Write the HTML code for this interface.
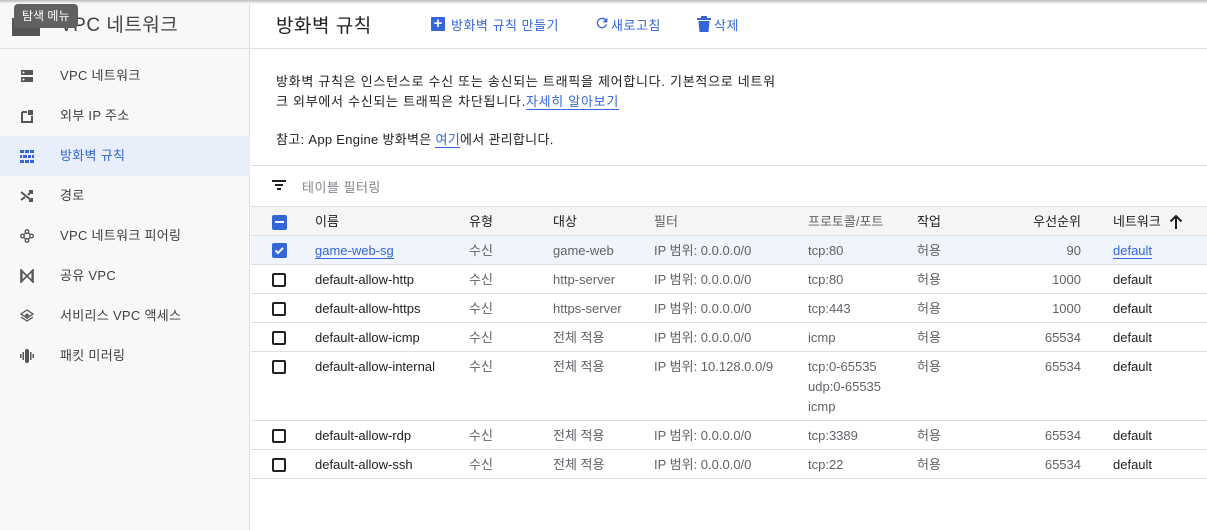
<!DOCTYPE html>
<html><head><meta charset="utf-8"><style>
*{box-sizing:border-box;margin:0;padding:0}
body{width:1207px;height:530px;overflow:hidden;background:#fff;font-family:"Liberation Sans","Noto Sans CJK KR",sans-serif;font-size:13px;color:#202124;position:relative}
.abs{position:absolute}
.side{left:0;top:0;width:250px;height:530px;background:#f8f8f8;border-right:1px solid #ddd}
.topsh{left:0;top:0;width:1207px;height:4px;background:linear-gradient(#bbb,#fff)}
.item{position:absolute;left:0;width:250px;height:40px;line-height:40px;padding-left:60px;color:#3c4043;font-size:13px;letter-spacing:0.3px}
.item.sel{background:#e8eefa;color:#3367d6}
.ico{position:absolute;left:20px;top:13px;width:14px;height:14px}
.hline{height:1px;background:#e0e0e0}
.row{position:absolute;left:251px;width:956px;border-bottom:1px solid #e0e0e0}
.c{position:absolute;top:8px;line-height:14px;color:#5f6368}
.cb{position:absolute;left:21px;top:8px;width:14px;height:14px;border:2px solid #202124;border-radius:2px}
</style></head><body>
<div class="abs side"></div>
<div class="abs topsh"></div>
<div class="abs" style="left:12px;top:18px;width:28px;height:18px;background:#555"></div>
<div class="abs" style="left:60px;top:10px;font-size:19px;color:#444;letter-spacing:0.5px">VPC 네트워크</div>
<div class="abs" style="left:14px;top:4px;height:24px;line-height:24px;padding:0 8px;background:#616161;color:#fff;border-radius:4px;font-size:12px">탐색 메뉴</div>
<div class="abs hline" style="left:0;top:48px;width:1207px"></div>
<div class="item" style="top:56px"><svg class="ico" viewBox="0 0 14 14"><rect x="1" y="1" width="12" height="5" fill="#555"/><rect x="1" y="8" width="12" height="5" fill="#555"/><circle cx="3.5" cy="3.5" r="1" fill="#fff"/><circle cx="3.5" cy="10.5" r="1" fill="#fff"/></svg>VPC 네트워크</div>
<div class="item" style="top:96px"><svg class="ico" viewBox="0 0 14 14"><path d="M2 3h5M2 3v10h10V7" stroke="#555" stroke-width="2" fill="none"/><rect x="8" y="1" width="5" height="5" fill="#555"/></svg>외부 IP 주소</div>
<div class="item sel" style="top:136px"><svg class="ico" viewBox="0 0 14 14"><g fill="#3367d6"><rect x="0" y="1" width="14" height="3"/><rect x="0" y="6" width="14" height="3"/><rect x="0" y="11" width="14" height="3"/></g><g fill="#e8eefa"><rect x="4" y="1" width="1" height="3"/><rect x="9" y="1" width="1" height="3"/><rect x="2" y="6" width="1" height="3"/><rect x="7" y="6" width="1" height="3"/><rect x="11" y="6" width="1" height="3"/><rect x="4" y="11" width="1" height="3"/><rect x="9" y="11" width="1" height="3"/></g></svg>방화벽 규칙</div>
<div class="item" style="top:176px"><svg class="ico" viewBox="0 0 14 14"><path d="M1 3l10 8M1 11l4-3M8 6l3-3M9 2h3v3M9 12h3V9" stroke="#555" stroke-width="2" fill="none"/></svg>경로</div>
<div class="item" style="top:216px"><svg class="ico" viewBox="0 0 14 14" fill="none" stroke="#555" stroke-width="1.3"><circle cx="7" cy="2.5" r="1.8"/><circle cx="2.5" cy="7" r="1.8"/><circle cx="11.5" cy="7" r="1.8"/><circle cx="7" cy="11.5" r="1.8"/><path d="M4 5.5l1.7-1.7M8.3 3.8l1.7 1.7M10 8.5l-1.7 1.7M5.7 10.2L4 8.5"/></svg>VPC 네트워크 피어링</div>
<div class="item" style="top:256px"><svg class="ico" viewBox="0 0 14 14"><path d="M1 1v12l6-6zM13 1v12L7 7z" stroke="#555" stroke-width="1.6" fill="none"/><path d="M1 1v12h1.6V1z" fill="#555"/><path d="M11.4 1v12H13V1z" fill="#555"/></svg>공유 VPC</div>
<div class="item" style="top:296px"><svg class="ico" viewBox="0 0 14 14" fill="none" stroke="#555" stroke-width="1.3"><path d="M7 1l6 4-6 4-6-4z"/><path d="M1 8l6 4 6-4"/><path d="M7 5v5M5 7l2-2 2 2"/></svg>서비리스 VPC 액세스</div>
<div class="item" style="top:336px"><svg class="ico" viewBox="0 0 14 14" fill="#555"><rect x="5" y="0" width="4" height="14" rx="2"/><rect x="2.5" y="3" width="1.5" height="8"/><rect x="10" y="3" width="1.5" height="8"/><rect x="0" y="5" width="1.5" height="4"/><rect x="12.5" y="5" width="1.5" height="4"/></svg>패킷 미러링</div>

<div class="abs" style="left:276px;top:11px;font-size:19px;color:#202124;letter-spacing:0.5px">방화벽 규칙</div>
<div class="abs" style="left:431px;top:17px;width:14px;height:14px;background:#3367d6;border-radius:1px;color:#fff;font-size:15px;line-height:13px;text-align:center;font-weight:bold">+</div>
<div class="abs" style="left:451px;top:15px;color:#3367d6;letter-spacing:0.5px">방화벽 규칙 만들기</div>
<svg class="abs" style="left:594px;top:15px" width="16" height="16" viewBox="0 0 24 24"><path fill="#3367d6" d="M17.65 6.35A7.96 7.96 0 0 0 12 4a8 8 0 1 0 7.73 10h-2.08A6 6 0 1 1 12 6c1.66 0 3.14.69 4.22 1.78L13 11h7V4l-2.35 2.35z"/></svg>
<div class="abs" style="left:611px;top:15px;color:#3367d6;letter-spacing:0.5px">새로고침</div>
<svg class="abs" style="left:697px;top:16px" width="14" height="16" viewBox="0 0 14 16"><rect x="4" y="0" width="6" height="2" fill="#3367d6"/><rect x="0" y="2" width="14" height="2" fill="#3367d6"/><path d="M1.5 5h11l-1 11h-9z" fill="#3367d6"/></svg>
<div class="abs" style="left:714px;top:15px;color:#3367d6;letter-spacing:0.5px">삭제</div>

<div class="abs" style="left:276px;top:72px;line-height:20px;color:#202124;width:560px;letter-spacing:0.72px">방화벽 규칙은 인스턴스로 수신 또는 송신되는 트래픽을 제어합니다. 기본적으로 네트워<br>크 외부에서 수신되는 트래픽은 차단됩니다.<span style="color:#3367d6;border-bottom:1px solid #3367d6">자세히 알아보기</span></div>
<div class="abs" style="left:276px;top:129px;color:#202124;letter-spacing:0.3px">참고: App Engine 방화벽은 <span style="color:#3367d6;border-bottom:1px solid #3367d6">여기</span>에서 관리합니다.</div>

<div class="abs hline" style="left:251px;top:165px;width:956px"></div>
<svg class="abs" style="left:272px;top:180px" width="14" height="10" viewBox="0 0 14 10"><rect x="0" y="0" width="14" height="2" fill="#202124"/><rect x="3" y="4" width="8" height="2" fill="#202124"/><rect x="5" y="8" width="4" height="2" fill="#202124"/></svg>
<div class="abs" style="left:302px;top:177px;color:#80868b;letter-spacing:0.5px">테이블 필터링</div>

<div class="row" style="top:206px;height:30px;background:#f5f5f5;border-top:1px solid #e0e0e0">
<div style="position:absolute;left:21px;top:8px;width:15px;height:15px;background:#3367d6;border-radius:2px"><div style="position:absolute;left:3px;top:6px;width:9px;height:2px;background:#fff"></div></div>
<div class="c" style="left:64px;color:#202124">이름</div>
<div class="c" style="left:218px;color:#202124">유형</div>
<div class="c" style="left:302px;color:#202124">대상</div>
<div class="c" style="left:403px">필터</div>
<div class="c" style="left:557px">프로토콜/포트</div>
<div class="c" style="left:666px;color:#202124">작업</div>
<div class="c" style="left:730px;width:100px;text-align:right;color:#202124">우선순위</div>
<div class="c" style="left:862px;color:#202124">네트워크</div>
<svg style="position:absolute;left:918px;top:7px" width="14" height="15" viewBox="0 0 14 15"><path d="M7 15V2M1.5 7.5L7 2l5.5 5.5" stroke="#202124" stroke-width="2" fill="none"/></svg>
</div>

<div class="row" style="top:236px;height:29px;background:#eff4fd">
<div style="position:absolute;left:21px;top:7px;width:15px;height:15px;background:#3367d6;border-radius:2px"><svg width="15" height="15" viewBox="0 0 15 15"><path d="M3.5 7.5l2.5 2.5 5-5" stroke="#fff" stroke-width="2" fill="none"/></svg></div>
<div class="c" style="left:64px;color:#3367d6;border-bottom:1px solid #3367d6">game-web-sg</div>
<div class="c" style="left:218px">수신</div><div class="c" style="left:302px">game-web</div><div class="c" style="left:403px">IP 범위: 0.0.0.0/0</div><div class="c" style="left:557px">tcp:80</div><div class="c" style="left:666px">허용</div><div class="c" style="left:730px;width:100px;text-align:right">90</div><div class="c" style="left:862px;color:#3367d6;border-bottom:1px solid #3367d6">default</div>
</div>
<div class="row" style="top:265px;height:29px"><div class="cb"></div>
<div class="c" style="left:64px;color:#202124">default-allow-http</div><div class="c" style="left:218px">수신</div><div class="c" style="left:302px">http-server</div><div class="c" style="left:403px">IP 범위: 0.0.0.0/0</div><div class="c" style="left:557px">tcp:80</div><div class="c" style="left:666px">허용</div><div class="c" style="left:730px;width:100px;text-align:right">1000</div><div class="c" style="left:862px;color:#202124">default</div></div>
<div class="row" style="top:294px;height:29px"><div class="cb"></div>
<div class="c" style="left:64px;color:#202124">default-allow-https</div><div class="c" style="left:218px">수신</div><div class="c" style="left:302px">https-server</div><div class="c" style="left:403px">IP 범위: 0.0.0.0/0</div><div class="c" style="left:557px">tcp:443</div><div class="c" style="left:666px">허용</div><div class="c" style="left:730px;width:100px;text-align:right">1000</div><div class="c" style="left:862px;color:#202124">default</div></div>
<div class="row" style="top:323px;height:29px"><div class="cb"></div>
<div class="c" style="left:64px;color:#202124">default-allow-icmp</div><div class="c" style="left:218px">수신</div><div class="c" style="left:302px">전체 적용</div><div class="c" style="left:403px">IP 범위: 0.0.0.0/0</div><div class="c" style="left:557px">icmp</div><div class="c" style="left:666px">허용</div><div class="c" style="left:730px;width:100px;text-align:right">65534</div><div class="c" style="left:862px;color:#202124">default</div></div>
<div class="row" style="top:352px;height:69px"><div class="cb"></div>
<div class="c" style="left:64px;color:#202124">default-allow-internal</div><div class="c" style="left:218px">수신</div><div class="c" style="left:302px">전체 적용</div><div class="c" style="left:403px">IP 범위: 10.128.0.0/9</div><div class="c" style="left:557px;line-height:20px;top:5px">tcp:0-65535<br>udp:0-65535<br>icmp</div><div class="c" style="left:666px">허용</div><div class="c" style="left:730px;width:100px;text-align:right">65534</div><div class="c" style="left:862px;color:#202124">default</div></div>
<div class="row" style="top:421px;height:29px"><div class="cb"></div>
<div class="c" style="left:64px;color:#202124">default-allow-rdp</div><div class="c" style="left:218px">수신</div><div class="c" style="left:302px">전체 적용</div><div class="c" style="left:403px">IP 범위: 0.0.0.0/0</div><div class="c" style="left:557px">tcp:3389</div><div class="c" style="left:666px">허용</div><div class="c" style="left:730px;width:100px;text-align:right">65534</div><div class="c" style="left:862px;color:#202124">default</div></div>
<div class="row" style="top:450px;height:29px"><div class="cb"></div>
<div class="c" style="left:64px;color:#202124">default-allow-ssh</div><div class="c" style="left:218px">수신</div><div class="c" style="left:302px">전체 적용</div><div class="c" style="left:403px">IP 범위: 0.0.0.0/0</div><div class="c" style="left:557px">tcp:22</div><div class="c" style="left:666px">허용</div><div class="c" style="left:730px;width:100px;text-align:right">65534</div><div class="c" style="left:862px;color:#202124">default</div></div>
</body></html>
